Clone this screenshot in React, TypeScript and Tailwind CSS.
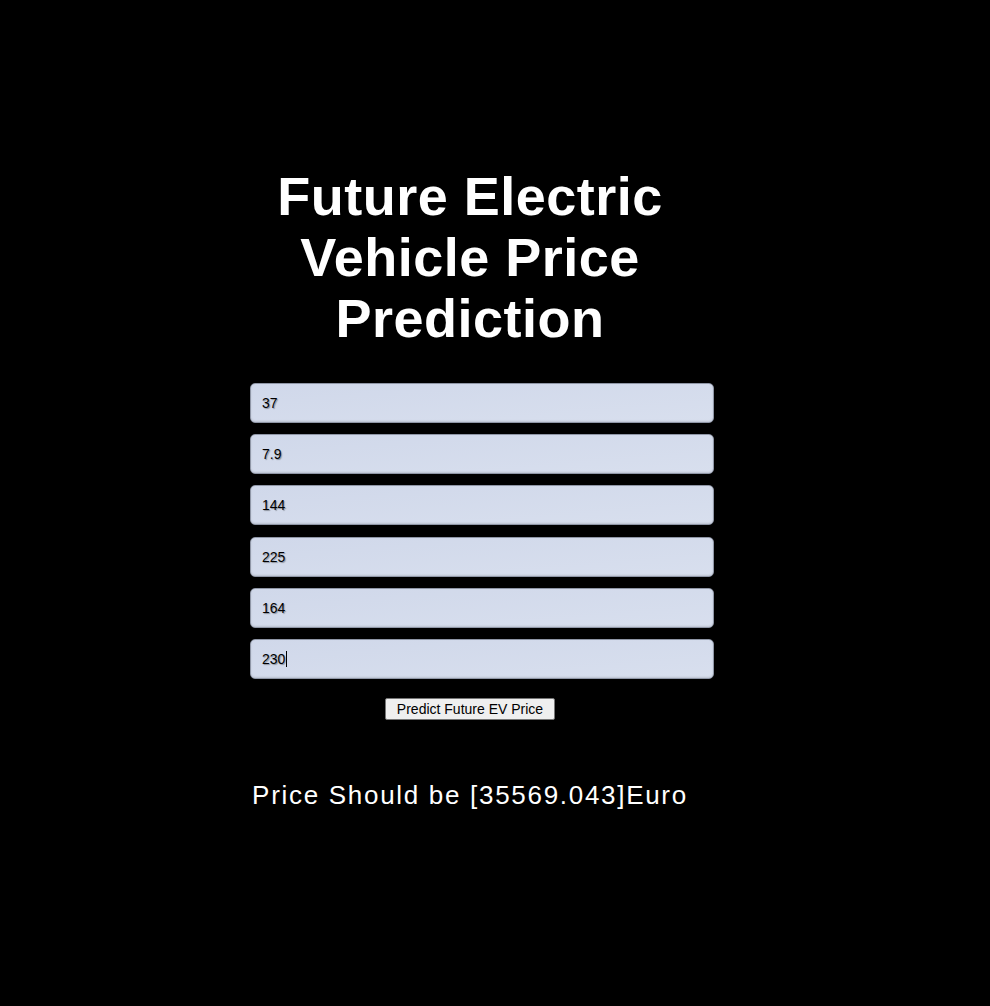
import React from "react";

const values = ["37", "7.9", "144", "225", "164", "230"];

export default function App() {
  return (
    <div className="min-h-[1006px] bg-black font-['Liberation_Sans',Arial,sans-serif]">
      <div className="ml-[250px] flex w-[440px] flex-col items-center pt-[166px]">
        <h1 className="text-center text-[54px] font-bold leading-[61px] tracking-[0.5px] text-white">
          Future Electric Vehicle Price Prediction
        </h1>
        <form className="mt-[34px] flex w-full flex-col gap-[11.2px]">
          {values.map((v, i) => (
            <div key={i} className="relative w-[464px]">
              <input
                readOnly
                value={v}
                className="h-10 w-full rounded-[5px] border border-[#8f96a6] bg-gradient-to-br from-[#d0d8ea] to-[#d8dfee] px-[11px] text-[14px] text-black outline-none [text-shadow:1px_1px_1px_rgba(0,0,0,0.35)] shadow-[inset_0_-1px_2px_rgba(0,0,0,0.12)]"
              />
              {i === values.length - 1 && (
                <span className="absolute left-[36px] top-[12px] h-4 w-px bg-black" />
              )}
            </div>
          ))}
        </form>
        <button
          type="button"
          className="mt-[19px] h-[22px] rounded-[2px] border border-[#767676] bg-[#efefef] px-[11px] text-[14px] leading-none text-black"
        >
          Predict Future EV Price
        </button>
        <p className="mt-[60px] text-center text-[26px] leading-[30px] tracking-[1.7px] text-white">
          Price Should be [35569.043]Euro
        </p>
      </div>
    </div>
  );
}
